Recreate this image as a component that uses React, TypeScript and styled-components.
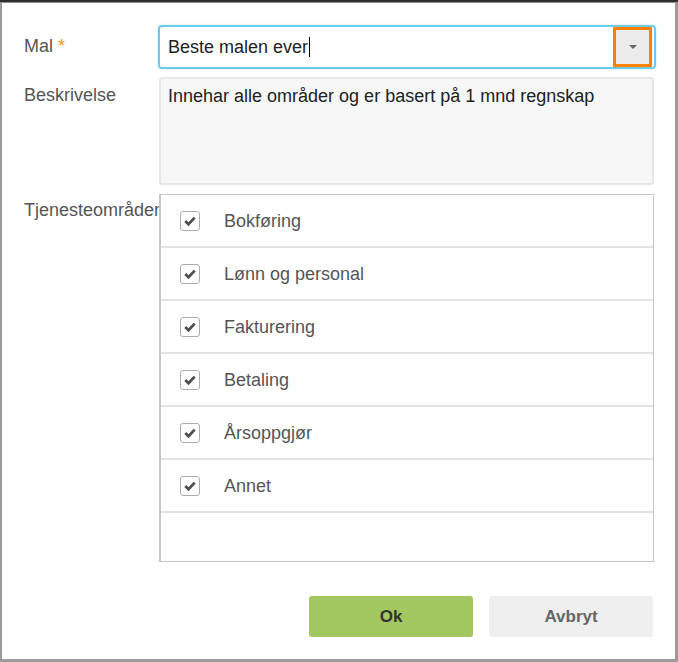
import * as React from 'react';
import styled, { createGlobalStyle } from 'styled-components';

const GlobalStyle = createGlobalStyle`
  body {
    margin: 0;
    background: #2e2e2e;
    font-family: 'Liberation Sans', Arial, sans-serif;
  }
`;

const Backdrop = styled.div`
  height: 662px;
  padding-top: 2px;
  box-sizing: border-box;
`;

const Dialog = styled.div`
  height: 660px;
  box-sizing: border-box;
  background: #fff;
  border-top: 1px solid #8e8e8e;
  border-left: 2px solid #9b9b9b;
  border-right: 3px solid #9b9b9b;
  border-bottom: 3px solid #9b9b9b;
  padding: 22px 19px 22px 22px;
  display: flex;
  flex-direction: column;
`;

const FormRow = styled.div<{ gap?: number }>`
  display: grid;
  grid-template-columns: 134px 1fr;
  margin-top: ${p => p.gap ?? 0}px;
`;

const Label = styled.label<{ top: number }>`
  font-size: 18px;
  line-height: 22px;
  color: #555;
  padding-top: ${p => p.top}px;
  white-space: nowrap;
`;

const Required = styled.span`
  color: #f39221;
  margin-left: 5px;
`;

const InputBox = styled.div`
  height: 44px;
  box-sizing: border-box;
  border: 2px solid #6ccbea;
  border-radius: 4px;
  box-shadow: 0 0 2px rgba(108, 203, 234, 0.6);
  display: flex;
  align-items: stretch;
  padding-left: 8px;
  padding-right: 2px;
`;

const InputText = styled.div`
  flex: 1;
  display: flex;
  align-items: center;
  font-size: 18px;
  color: #222;
`;

const Caret = styled.span`
  display: inline-block;
  width: 1px;
  height: 20px;
  background: #000;
  margin-left: 1px;
`;

const DropButton = styled.div`
  width: 39px;
  flex: 0 0 39px;
  box-sizing: border-box;
  border: 3px solid #ff7f00;
  border-radius: 1px;
  background: #ebebeb;
  display: flex;
  align-items: center;
  justify-content: center;
`;

const Triangle = styled.span`
  width: 0;
  height: 0;
  border-left: 4px solid transparent;
  border-right: 4px solid transparent;
  border-top: 4px solid #666;
`;

const TextArea = styled.div`
  height: 108px;
  box-sizing: border-box;
  margin: 0 2px 0 1px;
  background: #f7f7f7;
  border: 2px solid #e6e6e6;
  border-radius: 3px;
  padding: 6px 7px;
  font-size: 18px;
  line-height: 22px;
  color: #222;
`;

const List = styled.div`
  margin: 0 2px 0 1px;
  border: 1px solid #c6c6c6;
  border-left-width: 2px;
  background: #fff;
`;

const Row = styled.div`
  height: 51px;
  border-bottom: 2px solid #e2e2e2;
  display: flex;
  align-items: center;
  padding: 1px 0 0 19px;
  box-sizing: border-box;
  gap: 24px;
  font-size: 18px;
  color: #555;
  height: 53px;
`;

const EmptyRow = styled.div`
  height: 48px;
`;

const Box = styled.span`
  width: 20px;
  height: 20px;
  box-sizing: border-box;
  border: 1px solid #adadad;
  border-radius: 3px;
  display: flex;
  align-items: center;
  justify-content: center;
  background: #fff;
`;

const Footer = styled.div`
  margin-top: 34px;
  display: flex;
  justify-content: flex-end;
  gap: 16px;
  padding-right: 3px;
`;

const Button = styled.button<{ primary?: boolean }>`
  width: 164px;
  height: 41px;
  border: none;
  border-radius: 3px;
  font-family: 'Liberation Sans', Arial, sans-serif;
  font-size: 17px;
  font-weight: bold;
  background: ${p => (p.primary ? '#a3c760' : '#efefef')};
  color: ${p => (p.primary ? '#333' : '#666')};
`;

const services = ['Bokføring', 'Lønn og personal', 'Fakturering', 'Betaling', 'Årsoppgjør', 'Annet'];

const Check = () => (
  <svg width="14" height="14" viewBox="0 0 14 14">
    <path d="M2.3 7 L5.5 10.2 L11.7 3.6" fill="none" stroke="#4f4f4f" strokeWidth="2.8" />
  </svg>
);

export default function App() {
  return (
    <Backdrop>
      <GlobalStyle />
      <Dialog>
        <FormRow>
          <Label top={10}>
            Mal<Required>*</Required>
          </Label>
          <InputBox>
            <InputText>
              Beste malen ever<Caret />
            </InputText>
            <DropButton>
              <Triangle />
            </DropButton>
          </InputBox>
        </FormRow>
        <FormRow gap={8}>
          <Label top={7}>Beskrivelse</Label>
          <TextArea>Innehar alle områder og er basert på 1 mnd regnskap</TextArea>
        </FormRow>
        <FormRow gap={9}>
          <Label top={5}>Tjenesteområder</Label>
          <List>
            {services.map(s => (
              <Row key={s}>
                <Box>
                  <Check />
                </Box>
                {s}
              </Row>
            ))}
            <EmptyRow />
          </List>
        </FormRow>
        <Footer>
          <Button primary>Ok</Button>
          <Button>Avbryt</Button>
        </Footer>
      </Dialog>
    </Backdrop>
  );
}
